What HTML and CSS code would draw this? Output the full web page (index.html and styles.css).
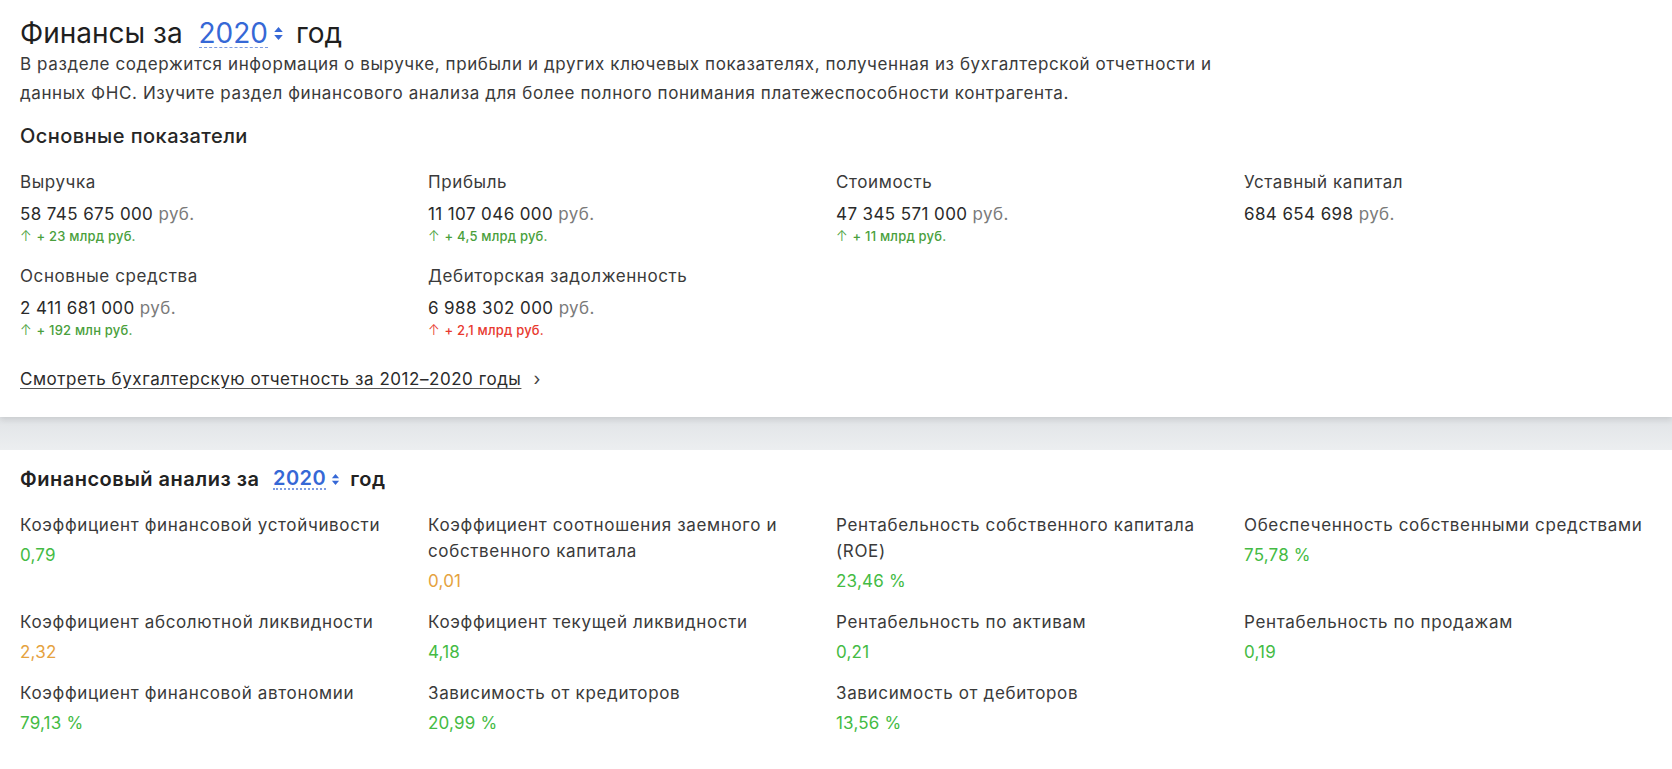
FILE: index.html
```html
<!DOCTYPE html>
<html lang="ru">
<head>
<meta charset="utf-8">
<link rel="stylesheet" href="styles.css">
</head>
<body>
<section class="card">
  <h1 class="title">Финансы за <span class="year">2020</span><svg class="caret caret-lg" viewBox="0 0 10 14"><path d="M5 1 L9 5.5 H1 Z M5 13 L9 8.5 H1 Z"/></svg>год</h1>
  <p class="desc">В разделе содержится информация о выручке, прибыли и других ключевых показателях, полученная из бухгалтерской отчетности и<br>данных ФНС. Изучите раздел финансового анализа для более полного понимания платежеспособности контрагента.</p>
  <h2 class="subtitle">Основные показатели</h2>
  <div class="grid">
    <div class="item">
      <div class="label">Выручка</div>
      <div class="value">58 745 675 000 <span class="cur">руб.</span></div>
      <div class="delta up"><span class="arr">↑</span> + 23 млрд руб.</div>
    </div>
    <div class="item">
      <div class="label">Прибыль</div>
      <div class="value">11 107 046 000 <span class="cur">руб.</span></div>
      <div class="delta up"><span class="arr">↑</span> + 4,5 млрд руб.</div>
    </div>
    <div class="item">
      <div class="label">Стоимость</div>
      <div class="value">47 345 571 000 <span class="cur">руб.</span></div>
      <div class="delta up"><span class="arr">↑</span> + 11 млрд руб.</div>
    </div>
    <div class="item">
      <div class="label">Уставный капитал</div>
      <div class="value">684 654 698 <span class="cur">руб.</span></div>
    </div>
    <div class="item">
      <div class="label">Основные средства</div>
      <div class="value">2 411 681 000 <span class="cur">руб.</span></div>
      <div class="delta up"><span class="arr">↑</span> + 192 млн руб.</div>
    </div>
    <div class="item">
      <div class="label">Дебиторская задолженность</div>
      <div class="value">6 988 302 000 <span class="cur">руб.</span></div>
      <div class="delta down"><span class="arr">↑</span> + 2,1 млрд руб.</div>
    </div>
  </div>
  <a class="link" href="#"><span class="link-text">Смотреть бухгалтерскую отчетность за 2012–2020 годы</span><span class="chev">›</span></a>
</section>
<div class="band"></div>
<section class="analysis">
  <h2 class="title2">Финансовый анализ за <span class="year year-sm">2020</span><svg class="caret caret-sm" viewBox="0 0 10 14"><path d="M5 1 L9 5.5 H1 Z M5 13 L9 8.5 H1 Z"/></svg>год</h2>
  <div class="grid2">
    <div class="metric"><div class="mlabel">Коэффициент финансовой устойчивости</div><div class="mval good">0,79</div></div>
    <div class="metric"><div class="mlabel">Коэффициент соотношения заемного и собственного капитала</div><div class="mval warn">0,01</div></div>
    <div class="metric"><div class="mlabel">Рентабельность собственного капитала (ROE)</div><div class="mval good">23,46 %</div></div>
    <div class="metric"><div class="mlabel">Обеспеченность собственными средствами</div><div class="mval good">75,78 %</div></div>
    <div class="metric"><div class="mlabel">Коэффициент абсолютной ликвидности</div><div class="mval warn">2,32</div></div>
    <div class="metric"><div class="mlabel">Коэффициент текущей ликвидности</div><div class="mval good">4,18</div></div>
    <div class="metric"><div class="mlabel">Рентабельность по активам</div><div class="mval good">0,21</div></div>
    <div class="metric"><div class="mlabel">Рентабельность по продажам</div><div class="mval good">0,19</div></div>
    <div class="metric"><div class="mlabel">Коэффициент финансовой автономии</div><div class="mval good">79,13 %</div></div>
    <div class="metric"><div class="mlabel">Зависимость от кредиторов</div><div class="mval good">20,99 %</div></div>
    <div class="metric"><div class="mlabel">Зависимость от дебиторов</div><div class="mval good">13,56 %</div></div>
  </div>
</section>
</body>
</html>
```

FILE: styles.css
```css
* { box-sizing: border-box; }
html, body { margin: 0; padding: 0; background: #fff; }
body {
  font-family: Inter, "Noto Sans", "Liberation Sans", sans-serif;
  color: #2b2b2b;
  width: 1672px;
}
.card {
  background: #fff;
  padding: 16px 20px 26px;
  position: relative;
  z-index: 1;
  box-shadow: 0 3px 6px rgba(0,0,0,0.10);
}
.title {
  margin: 0;
  font-size: 28px;
  line-height: 34px;
  font-weight: 400;
  color: #1f1f1f;
  display: flex;
  align-items: center;
  white-space: pre;
}
.year {
  color: #3668d6;
  border-bottom: 1.5px dashed #7d9be0;
  line-height: 28px;
  margin-left: 8px;
}
.caret { fill: #3668d6; }
.caret-lg { width: 11px; height: 15px; margin: 0 12px 0 5px; }
.desc {
  margin: 0;
  font-size: 17px;
  line-height: 29px;
  color: #3a3a3a;
  letter-spacing: 0.6px;
}
.subtitle {
  margin: 16px 0 0;
  font-size: 20px;
  line-height: 24px;
  font-weight: 500;
  letter-spacing: 0.45px;
  color: #262626;
}
.grid {
  margin-top: 22px;
  display: grid;
  grid-template-columns: repeat(4, 408px);
  row-gap: 18px;
}
.label {
  font-size: 17px;
  line-height: 24px;
  letter-spacing: 0.6px;
  color: #3a3a3a;
}
.value {
  margin-top: 8px;
  font-size: 17px;
  line-height: 24px;
  letter-spacing: 0.4px;
  color: #2a2a2a;
}
.cur { color: #7a7a7a; }
.delta {
  font-size: 13px;
  line-height: 20px;
  font-weight: 500;
  letter-spacing: 0.2px;
}
.delta .arr { font-weight: 300; font-size: 14px; margin-right: 1px; }
.delta.up { color: #4a9f3c; }
.delta.down { color: #e8392f; }
.link {
  display: inline-flex;
  align-items: center;
  margin-top: 27px;
  font-size: 17px;
  line-height: 24px;
  letter-spacing: 0.55px;
  color: #2b2b2b;
  text-decoration: none;
}
.link-text { text-decoration: underline; text-underline-offset: 3px; text-decoration-color: #555; }
.chev { margin-left: 12px; font-size: 18px; color: #444; }
.band {
  height: 33px;
  background: linear-gradient(#e1e4e7, #eceef0);
}
.analysis {
  padding: 16px 0 30px 20px;
}
.title2 {
  margin: 0;
  font-size: 20px;
  line-height: 26px;
  font-weight: 600;
  letter-spacing: 0.5px;
  color: #222;
  display: flex;
  align-items: center;
  white-space: pre;
}
.year-sm { margin-left: 8px; line-height: 20px; border-bottom-style: dotted; border-bottom-width: 2px; }
.caret-sm { width: 9px; height: 13px; margin: 0 10px 0 5px; }
.grid2 {
  margin-top: 20px;
  display: grid;
  grid-template-columns: repeat(3, 408px) 1fr;
  row-gap: 15px;
}
.mlabel {
  font-size: 17px;
  line-height: 26px;
  letter-spacing: 0.65px;
  color: #3a3a3a;
}
.mval {
  margin-top: 4px;
  font-size: 17px;
  line-height: 26px;
  letter-spacing: 0.2px;
}
.good { color: #44bb44; }
.warn { color: #e5a23e; }
```
